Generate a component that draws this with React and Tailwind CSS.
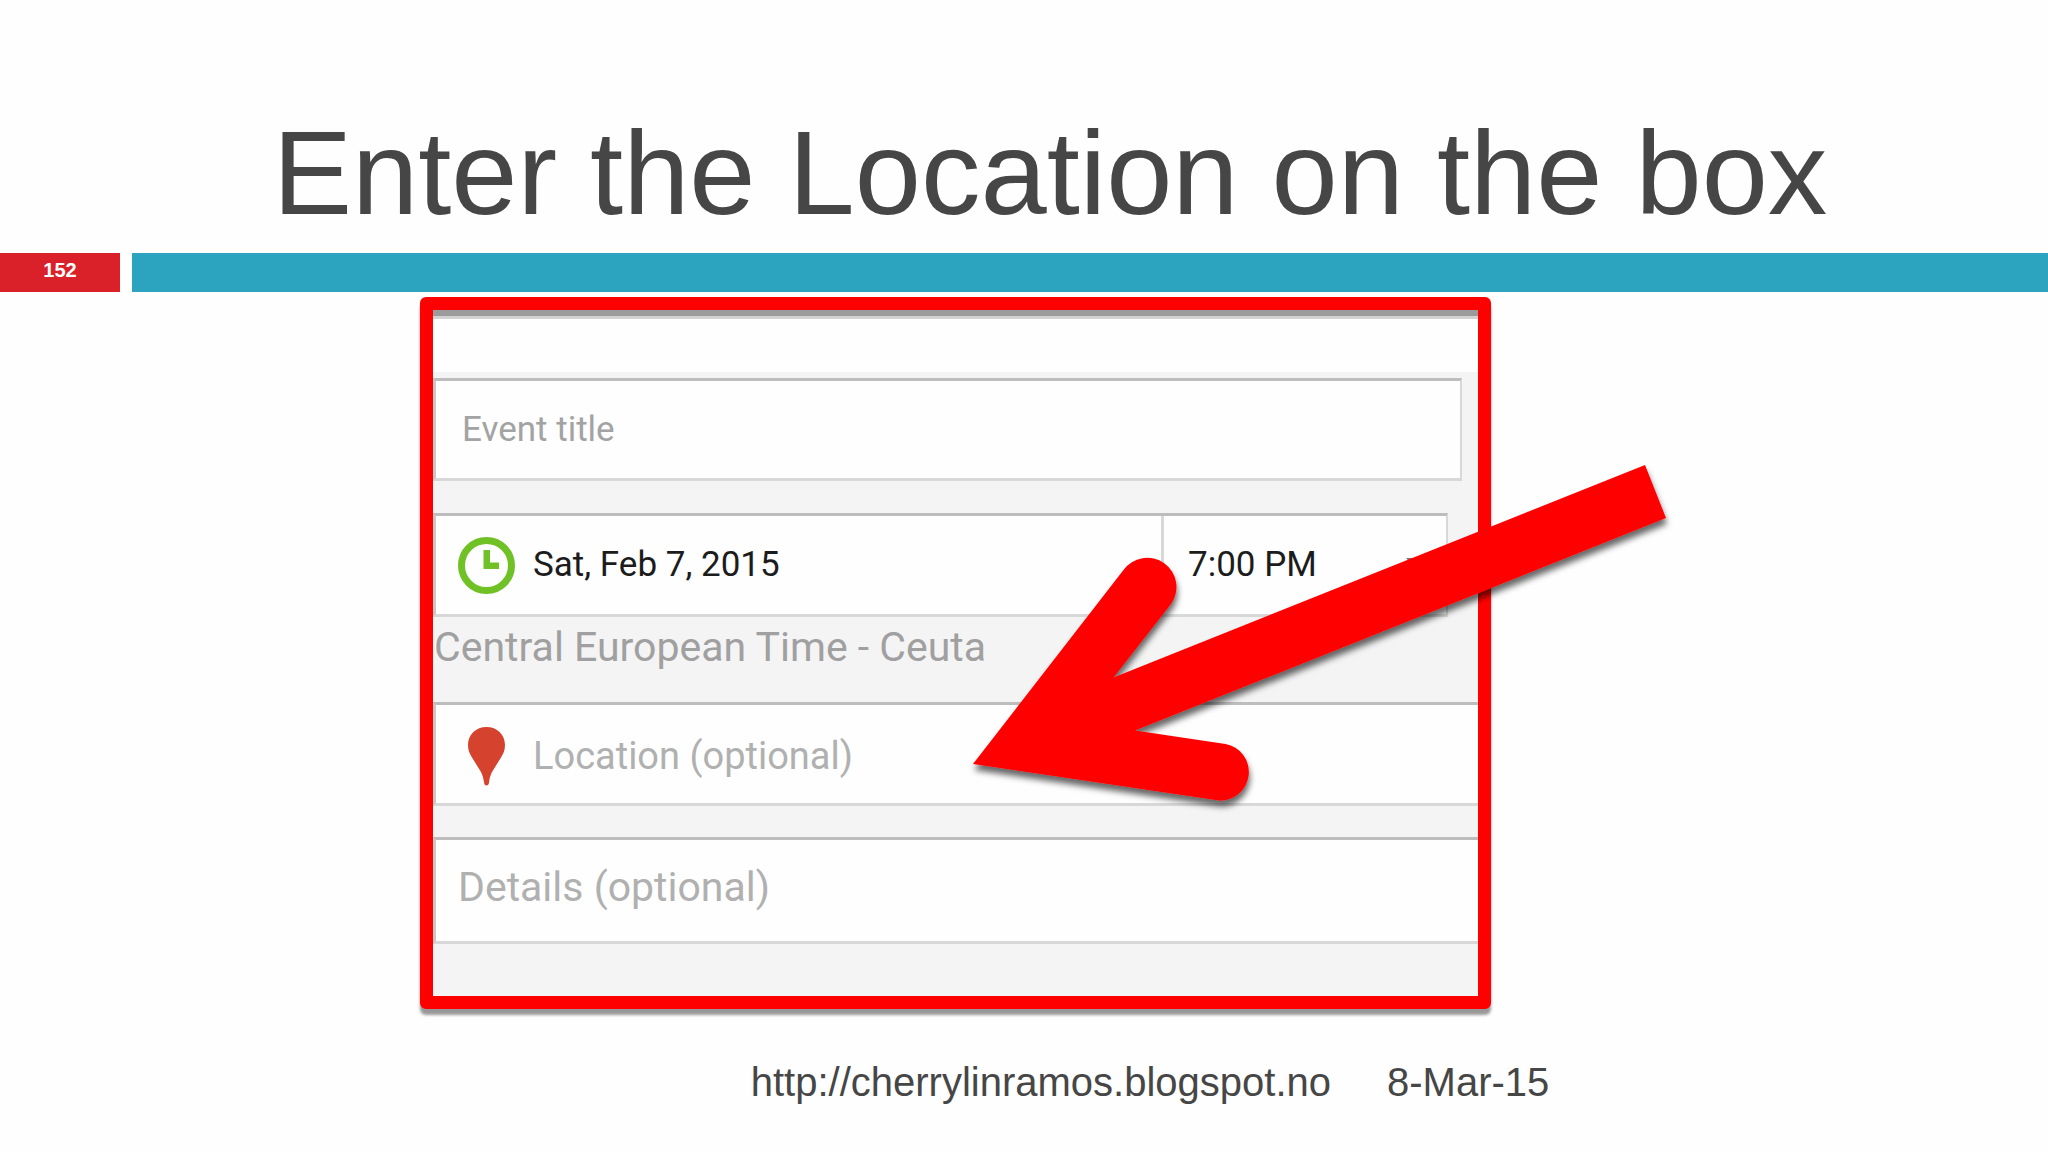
import { useState } from "react";

const ClockIcon = () => (
  <svg viewBox="0 0 57 57" className="w-[57px] h-[57px] shrink-0" aria-hidden="true">
    <circle cx="28.5" cy="28.5" r="25" fill="none" stroke="#6fc126" strokeWidth="7" />
    <path d="M25.5 13h6.500v12.500h9v6.500H25.500z" fill="#6fc126" />
  </svg>
);

const PinIcon = () => (
  <svg viewBox="0 0 57 60" className="w-[57px] h-[60px] shrink-0" aria-hidden="true">
    <path
      d="M28.500 1C18 1 10 8.500 10 19c0 5 1.500 8.500 4 12.500L23 46c1.800 3.500 2.600 7 3 10.500.3 2 1 3 2.500 3s2.200-1 2.500-3c.4-3.500 1.200-7 3-10.500l9-14.500c2.500-4 4-7.500 4-12.500C47 8.500 39 1 28.500 1z"
      fill="#d5432f"
    />
  </svg>
);

// Arrow drawn over the form, pointing at the location box
const Arrow = () => (
  <svg
    viewBox="13 13 1045 686"
    className="absolute inset-0 w-full h-full overflow-visible pointer-events-none"
    aria-hidden="true"
  >
    <defs>
      <filter id="arrow-shadow" x="-10%" y="-10%" width="120%" height="130%">
        <feDropShadow dx="1" dy="6" stdDeviation="3" floodColor="#000" floodOpacity="0.6" />
      </filter>
    </defs>
    <path
      d="M553 467 L703.500 273 A28.500 28.500 0 0 1 751 307 L693.500 380.500 L1225 168 L1246 221 L715 433.500 L805.500 447 A28.500 28.500 0 0 1 799 503.500 Z"
      fill="#ff0000"
      filter="url(#arrow-shadow)"
    />
  </svg>
);

const EventForm = () => {
  const [title, setTitle] = useState("");
  const [time, setTime] = useState("7:00 PM");
  const [location, setLocation] = useState("");
  const [details, setDetails] = useState("");

  return (
    <form
      onSubmit={(e) => e.preventDefault()}
      className="relative col-start-2 border-[13px] border-[#ff0000] rounded-md bg-[#f4f4f5] font-[Roboto,sans-serif] shadow-[0_6px_3px_rgba(0,0,0,0.4)]"
    >
      <div className="h-[62px] bg-[#fefefe] border-t-6 border-[#9b9b9b]">
        <div className="h-[3px] bg-[#d3d3d3]" />
      </div>

      {/* Event title */}
      <div className="pt-1.5 pr-4">
        <input
          type="text"
          aria-label="Event title"
          placeholder="Event title"
          value={title}
          onChange={(e) => setTitle(e.target.value)}
          className="block w-full h-[103px] pl-[26px] pr-4 text-[35px] bg-[#fefefe] border-2 border-y-3 border-l-3 border-[#d8d8d8] border-t-[#bdbdbd] border-l-[#c8c8c8] placeholder:text-[#a3a3a3] outline-none"
        />
      </div>

      {/* Date and time */}
      <div className="flex h-[104px] mt-8 mr-[30px] bg-[#fefefe] border-2 border-y-3 border-l-3 border-[#d8d8d8] border-t-[#bdbdbd] border-l-[#c8c8c8]">
        <button type="button" className="flex items-center flex-1 gap-[18px] pl-[22px] text-[35px] text-[#1c1c1c]">
          <ClockIcon />
          <span>Sat, Feb 7, 2015</span>
        </button>
        <div className="relative w-[285px] border-l-3 border-[#d8d8d8]">
          <select
            aria-label="Time"
            value={time}
            onChange={(e) => setTime(e.target.value)}
            className="w-full h-full pl-6 text-[35px] text-[#1c1c1c] appearance-none outline-none"
          >
            <option>7:00 PM</option>
            <option>8:00 PM</option>
          </select>
          <svg viewBox="0 0 20 12" className="absolute right-5 top-[41px] w-5 h-3" aria-hidden="true">
            <path d="M0 1h20L10 12z" fill="#777" />
          </svg>
        </div>
      </div>

      <p className="h-[85px] pt-1 pl-px text-[41px] leading-[52px] text-[#a0a0a0] whitespace-nowrap">
        Central European Time - Ceuta
      </p>

      {/* Location */}
      <label className="flex items-center gap-[18px] h-[104px] pt-1 pl-[22px] bg-[#fefefe] border-l-3 border-y-3 border-[#d8d8d8] border-t-[#bdbdbd] border-l-[#c8c8c8]">
        <PinIcon />
        <input
          type="text"
          aria-label="Location"
          placeholder="Location (optional)"
          value={location}
          onChange={(e) => setLocation(e.target.value)}
          className="flex-1 min-w-0 h-full text-[38px] placeholder:text-[#b0b0b0] outline-none"
        />
      </label>

      {/* Details */}
      <div className="pt-[31px] pb-[52px]">
        <input
          type="text"
          aria-label="Details"
          placeholder="Details (optional)"
          value={details}
          onChange={(e) => setDetails(e.target.value)}
          className="block w-full h-[107px] pl-[22px] pb-2 text-[41px] bg-[#fefefe] border-l-3 border-y-3 border-[#d8d8d8] border-t-[#bdbdbd] border-l-[#c8c8c8] placeholder:text-[#b0b0b0] outline-none"
        />
      </div>

      <Arrow />
    </form>
  );
};

export default function App() {
  return (
    <div className="min-h-screen overflow-hidden bg-[#fefefe] text-[#464646] font-['Liberation_Sans',Arial,sans-serif]">
      <h1 className="pt-[113px] pb-5 pl-[52px] text-[119px] leading-[120px] text-center whitespace-nowrap">
        Enter the Location on the box
      </h1>

      <div className="flex gap-3 h-[39px]">
        <div className="flex items-center justify-center w-[120px] pb-1.5 text-[20px] font-bold text-white bg-[#da2028]">
          152
        </div>
        <div className="flex-1 bg-[#2ca3bf]" />
      </div>

      <main className="grid grid-cols-[420fr_1071fr_557fr] mt-[5px]">
        <EventForm />
      </main>

      <footer className="flex justify-center gap-14 pt-12 pb-8 pl-[252px] text-[40px] leading-[50px] whitespace-nowrap">
        <a href="http://cherrylinramos.blogspot.no">http://cherrylinramos.blogspot.no</a>
        <span>8-Mar-15</span>
      </footer>
    </div>
  );
}
